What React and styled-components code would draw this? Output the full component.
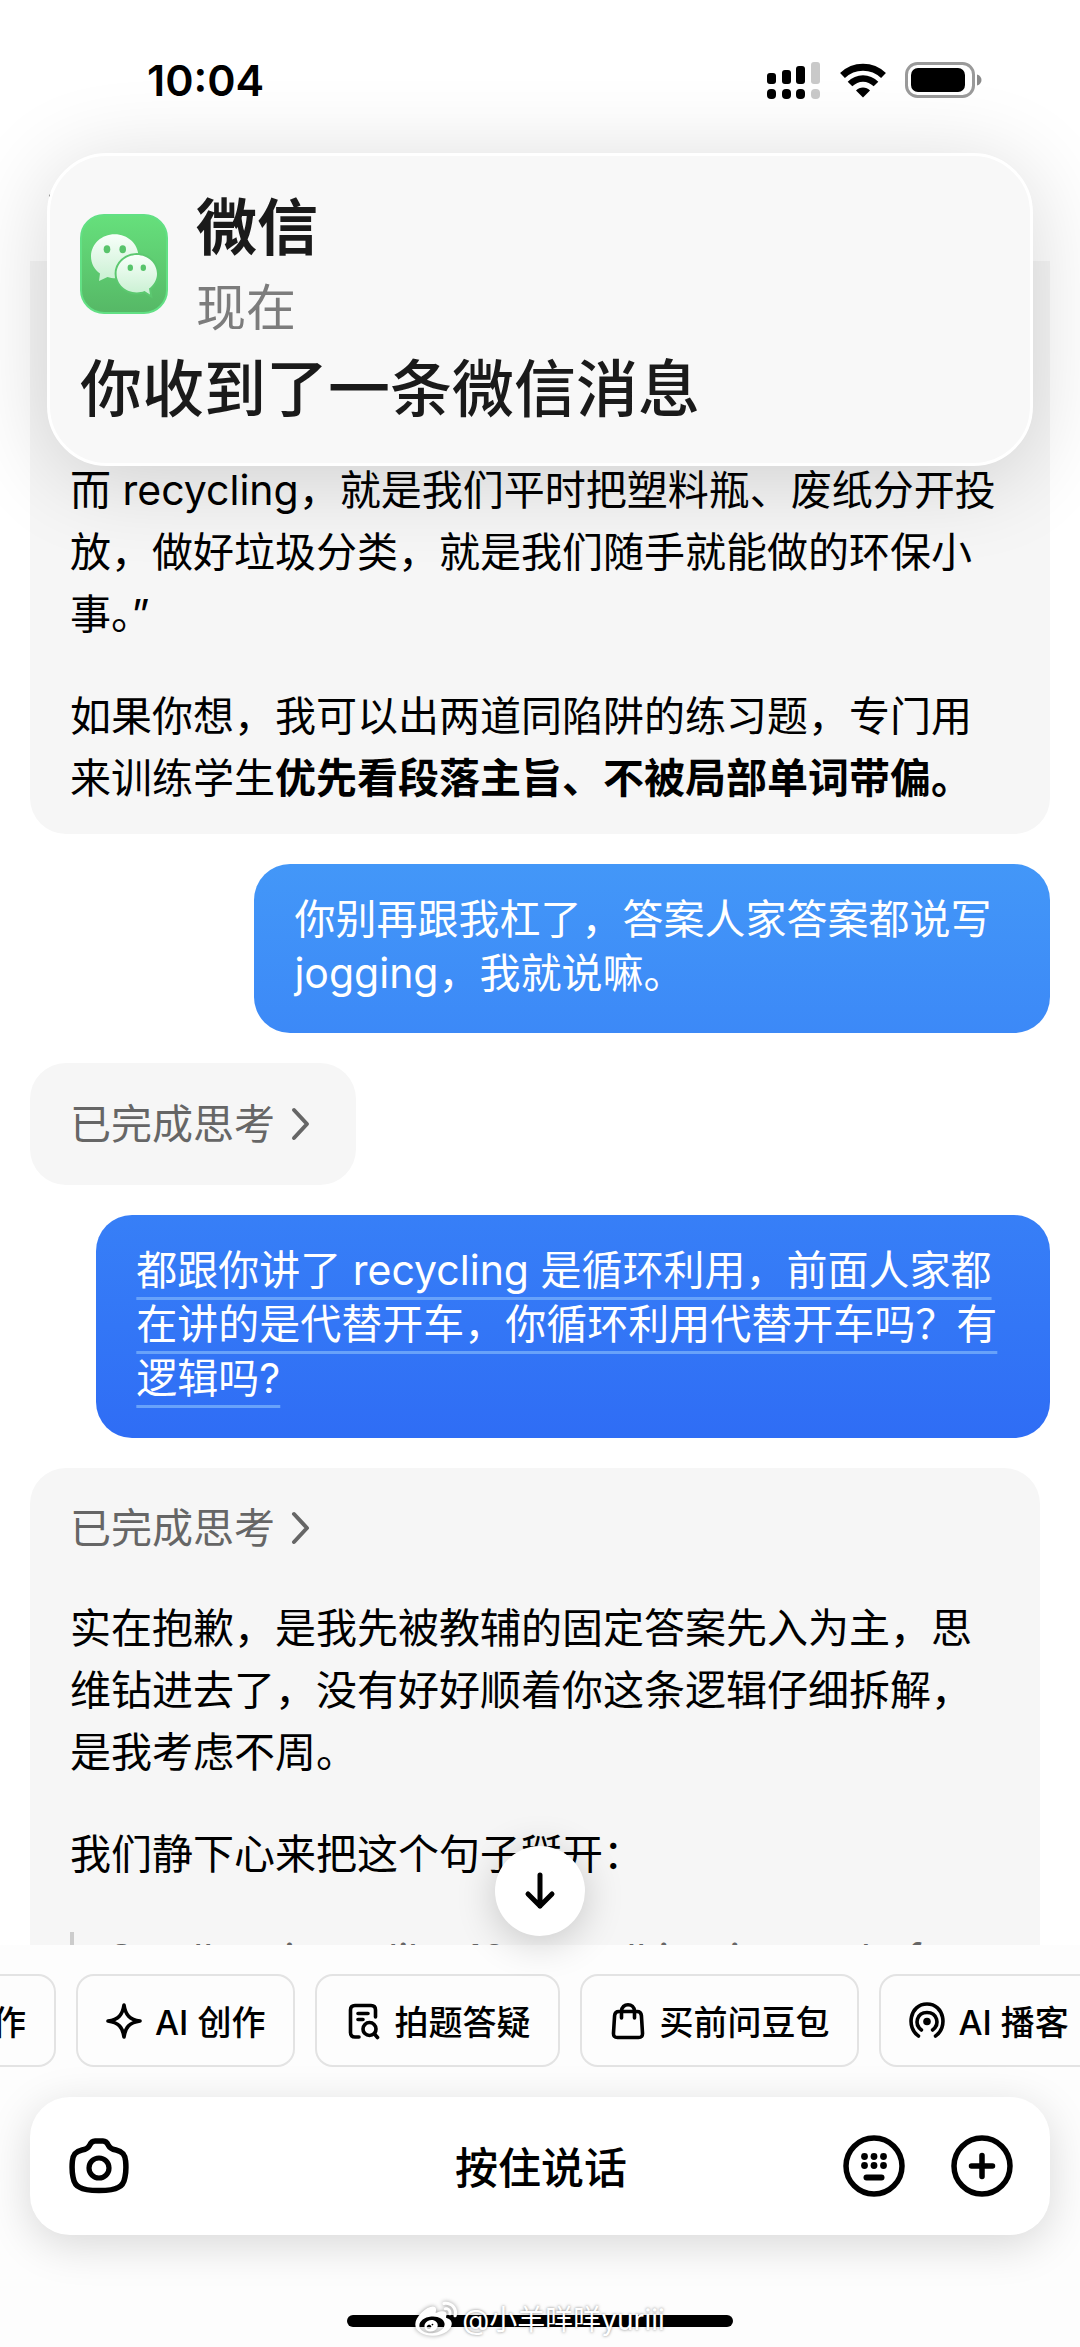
import { useLayoutEffect, useRef } from "react";
import styled, { createGlobalStyle } from "styled-components";
import { FaWeibo } from "react-icons/fa";

const CHIPS = [
	{ id: 1, label: "帮我写作", icon: "pen" },
	{ id: 2, label: "AI 创作", icon: "spark" },
	{ id: 3, label: "拍题答疑", icon: "doc" },
	{ id: 4, label: "买前问豆包", icon: "bag" },
	{ id: 5, label: "AI 播客", icon: "podcast" },
];

//! Icons

const SignalIcon = () => (
	<svg width="54" height="37" viewBox="0 0 54 37" aria-hidden="true">
		<g fill="#000">
			<rect x="0" y="11" width="9" height="11" rx="3" />
			<rect x="15" y="8" width="9" height="14" rx="3" />
			<rect x="29" y="4" width="9" height="18" rx="3" />
			<rect x="0" y="27" width="9" height="10" rx="4" />
			<rect x="15" y="27" width="9" height="10" rx="4" />
			<rect x="29" y="27" width="9" height="10" rx="4" />
		</g>
		<g fill="#c9c9c9">
			<rect x="44" y="0" width="9" height="22" rx="3" />
			<rect x="44" y="27" width="9" height="10" rx="4" />
		</g>
	</svg>
);

const WifiIcon = () => (
	<svg width="48" height="35" viewBox="0 0 48 35" fill="none" aria-hidden="true">
		<path d="M3.5 12.5C15 1.5 33 1.5 44.5 12.5" stroke="#000" strokeWidth="7" />
		<path d="M11 21C18.5 13.5 29.5 13.5 37 21" stroke="#000" strokeWidth="6.5" />
		<path d="M17 27.5C20.5 23.5 27.5 23.5 31 27.5L24 34.5Z" fill="#000" />
	</svg>
);

const BatteryIcon = () => (
	<svg width="77" height="36" viewBox="0 0 77 36" aria-hidden="true">
		<rect x="1.5" y="1.5" width="67" height="33" rx="11" fill="#fff" stroke="#9a9a9a" strokeWidth="3" />
		<rect x="6" y="6" width="54" height="24" rx="7" fill="#000" />
		<path d="M72 12.5C78 14 78 22 72 23.5Z" fill="#8a8a8a" />
	</svg>
);

const WechatIcon = () => (
	<svg width="88" height="100" viewBox="0 0 88 100" aria-hidden="true">
		<defs>
			<linearGradient id="wxBg" x1="0" y1="0" x2="0" y2="1">
				<stop offset="0" stopColor="#66e07c" />
				<stop offset="1" stopColor="#56b866" />
			</linearGradient>
			<linearGradient id="wxBubble" x1="0" y1="0" x2="0" y2="1">
				<stop offset="0" stopColor="#f8fffa" />
				<stop offset="1" stopColor="#c9f0d2" />
			</linearGradient>
		</defs>
		<rect x="1" y="1" width="86" height="98" rx="23" fill="url(#wxBg)" stroke="#62e084" strokeWidth="2" />
		<path
			d="M34.7 20.3C21.6 20.3 11 30 11 42.5C11 49.5 14.5 55.5 20 59.5L19 67L27.5 63C30 64 32.5 64.3 36 64.3C49 64.3 58.4 54.5 58.4 42.3C58.4 30 47.8 20.3 34.7 20.3Z"
			fill="url(#wxBubble)"
		/>
		<path
			d="M56.8 41C45.6 41 36.6 49.4 36.6 59.7C36.6 70 45.6 78.4 56.8 78.4C59.5 78.4 62 78 64.5 77L70 80.5L69 74.5C74 71 77 65.5 77 59.7C77 49.4 68 41 56.8 41Z"
			fill="url(#wxBubble)"
			stroke="#5cc870"
			strokeWidth="4"
			paintOrder="stroke"
		/>
		<g fill="#58c46b">
			<ellipse cx="27" cy="35.3" rx="3.3" ry="4" />
			<ellipse cx="42.7" cy="35.3" rx="3.3" ry="4" />
			<ellipse cx="50.3" cy="53.7" rx="2.7" ry="3.2" />
			<ellipse cx="63.3" cy="53.7" rx="2.7" ry="3.2" />
		</g>
	</svg>
);

const ChevronIcon = () => (
	<svg width="20" height="34" viewBox="0 0 20 34" fill="none" aria-hidden="true">
		<path d="M3 3L16 17L3 31" stroke="#666" strokeWidth="4" strokeLinecap="round" strokeLinejoin="round" />
	</svg>
);

const BackIcon = () => (
	<svg width="20" height="36" viewBox="0 0 20 36" fill="none" aria-hidden="true">
		<path d="M17 3L3 18L17 33" stroke="#000" strokeWidth="4" strokeLinecap="round" strokeLinejoin="round" />
	</svg>
);

const ArrowDownIcon = () => (
	<svg width="32" height="38" viewBox="0 0 32 38" fill="none" aria-hidden="true">
		<path d="M16 3V34M4 22L16 34L28 22" stroke="#000" strokeWidth="5" strokeLinecap="round" strokeLinejoin="round" />
	</svg>
);

const CameraIcon = () => (
	<svg width="60" height="56" viewBox="0 0 60 56" fill="none" stroke="#000" aria-hidden="true">
		<path
			d="M20.5 7.5C22 4 23.5 2.9 26 2.9H34C36.5 2.9 38 4 39.5 7.5C41 10.5 43 11.3 47 12C54 13.5 56 17 56.6 23C57.2 29 57 34 56 39C55 45 53 48 49 49.5C43 53.5 17 53.5 11 49.5C7 48 5 45 4 39C3 34 2.8 29 3.4 23C4 17 6 13.5 13 12C17 11.3 19 10.5 20.5 7.5Z"
			strokeWidth="5.5"
			strokeLinejoin="round"
		/>
		<circle cx="30" cy="30" r="10" strokeWidth="5.2" />
	</svg>
);

const KeyboardIcon = () => (
	<svg width="62" height="62" viewBox="0 0 62 62" fill="none" aria-hidden="true">
		<circle cx="31" cy="31" r="28" stroke="#000" strokeWidth="5.5" />
		<g fill="#000">
			<circle cx="21.5" cy="21.5" r="3.4" />
			<circle cx="31" cy="21.5" r="3.4" />
			<circle cx="40.5" cy="21.5" r="3.4" />
			<circle cx="21.5" cy="30.5" r="3.4" />
			<circle cx="31" cy="30.5" r="3.4" />
			<circle cx="40.5" cy="30.5" r="3.4" />
			<rect x="20.5" y="39.5" width="21" height="6" rx="3" />
		</g>
	</svg>
);

const PlusIcon = () => (
	<svg width="62" height="62" viewBox="0 0 62 62" fill="none" stroke="#000" strokeWidth="5.5" aria-hidden="true">
		<circle cx="31" cy="31" r="28" />
		<path d="M31 20.5V41.5M20.5 31H41.5" strokeLinecap="round" />
	</svg>
);

const ChipIcon = ({ name }) => (
	<svg
		width="36"
		height="38"
		viewBox="0 0 36 38"
		fill="none"
		stroke="#000"
		strokeWidth="3.6"
		strokeLinecap="round"
		strokeLinejoin="round"
		aria-hidden="true">
		{name === "pen" && <path d="M5 33L8 23L26 5L33 12L15 30Z" />}
		{name === "spark" && (
			<path d="M18 3C19.5 13 23.5 17.5 34 19C23.5 20.5 19.5 25 18 35C16.5 25 12.5 20.5 2 19C12.5 17.5 16.5 13 18 3Z" />
		)}
		{name === "doc" && (
			<>
				<path d="M14 35H10C7 35 5.5 33.5 5.5 30.5V8C5.5 5 7 3.5 10 3.5H26C29 3.5 30.5 5 30.5 8V15" />
				<path d="M13 11.5H23M13 17.5H18" />
				<circle cx="24.5" cy="27" r="6.5" />
				<path d="M29.5 32L32.5 35.5" />
			</>
		)}
		{name === "bag" && (
			<>
				<path d="M9 9.5H27C30 9.5 31.2 11 31.4 13.5L32.5 31C32.7 34 31.5 35.5 28.5 35.5H7.5C4.5 35.5 3.3 34 3.5 31L4.6 13.5C4.8 11 6 9.5 9 9.5Z" />
				<path d="M11.5 16V9.5C11.5 0.5 24.5 0.5 24.5 9.5V16" />
			</>
		)}
		{name === "podcast" && (
			<>
				<path d="M9.5 34C-3 26 0.5 2 18 2C35.5 2 39 26 26.5 34" />
				<path d="M12.5 28C4.5 22 8 10.5 18 10.5C28 10.5 31.5 22 23.5 28" />
				<circle cx="18" cy="19.5" r="3.8" fill="#000" stroke="none" />
			</>
		)}
	</svg>
);

const ThinkingLink = () => (
	<ThinkingButton type="button">
		已完成思考
		<ChevronIcon />
	</ThinkingButton>
);

const App = () => {
	const chipsRef = useRef(null);

	// the row rests with only the end of its first chip in view
	useLayoutEffect(() => {
		const row = chipsRef.current;
		row.scrollLeft = row.firstElementChild.offsetWidth - 56;
	}, []);

	return (
		<Screen>
			<GlobalStyle />
			<StatusBar>
				<Clock>10:04</Clock>
				<StatusIcons>
					<SignalIcon />
					<WifiIcon />
					<BatteryIcon />
				</StatusIcons>
			</StatusBar>

			<Header>
				<BackButton type="button" aria-label="返回">
					<BackIcon />
				</BackButton>
			</Header>

			<Notification role="alert">
				<NotificationTop>
					<WechatIcon />
					<div>
						<AppName>微信</AppName>
						<When>现在</When>
					</div>
				</NotificationTop>
				<Message>你收到了一条微信消息</Message>
			</Notification>

			<Chat>
				<Reply $continued>
					<p>
						而 recycling，就是我们平时把塑料瓶、废纸分开投
						<br />
						放，做好垃圾分类，就是我们随手就能做的环保小
						<br />
						事。”
					</p>
					<p>
						如果你想，我可以出两道同陷阱的练习题，专门用
						<br />
						来训练学生<strong>优先看段落主旨、不被局部单词带偏。</strong>
					</p>
				</Reply>

				<Question $width="78%" $from="#4397f8" $to="#3c89f7">
					你别再跟我杠了，答案人家答案都说写
					<br />
					jogging，我就说嘛。
				</Question>

				<ThinkingCard>
					<ThinkingLink />
				</ThinkingCard>

				<Question $width="93.5%" $from="#377ff7" $to="#2f6df5">
					<Underlined>
						都跟你讲了 recycling 是循环利用，前面人家都
						<br />
						在讲的是代替开车，你循环利用代替开车吗？有
						<br />
						逻辑吗?
					</Underlined>
				</Question>

				<Reply $inset>
					<ThinkingLink />
					<p>
						实在抱歉，是我先被教辅的固定答案先入为主，思
						<br />
						维钻进去了，没有好好顺着你这条逻辑仔细拆解，
						<br />
						是我考虑不周。
					</p>
					<p>我们静下心来把这个句子掰开：</p>
					<Quote>Small actions, like 12 or walking instead of</Quote>
				</Reply>
			</Chat>

			<Footer>
				<ScrollButton type="button" aria-label="回到底部">
					<ArrowDownIcon />
				</ScrollButton>
				<Chips ref={chipsRef}>
					{CHIPS.map((item) => (
						<Chip key={item.id} type="button">
							<ChipIcon name={item.icon} />
							{item.label}
						</Chip>
					))}
				</Chips>
				<InputBar>
					<IconButton type="button" aria-label="拍照">
						<CameraIcon />
					</IconButton>
					<TalkButton type="button">按住说话</TalkButton>
					<IconGroup>
						<IconButton type="button" aria-label="键盘">
							<KeyboardIcon />
						</IconButton>
						<IconButton type="button" aria-label="更多">
							<PlusIcon />
						</IconButton>
					</IconGroup>
				</InputBar>
				<HomeIndicator />
				<Watermark>
					<FaWeibo size={42} />
					@小羊咩咩yuriii
				</Watermark>
			</Footer>
		</Screen>
	);
};
export default App;

const GlobalStyle = createGlobalStyle`
	* {
		box-sizing: border-box;
	}
	body {
		margin: 0;
		background-color: #fff;
		color: #000;
		font-family: Inter, "Noto Sans CJK SC", sans-serif;
	}
	button {
		padding: 0;
		border: none;
		background: none;
		color: inherit;
		font-family: inherit;
		cursor: pointer;
	}
	p {
		margin: 0;
	}
	svg {
		display: block;
		flex-shrink: 0;
	}
`;

const Screen = styled.div`
	position: relative;
	display: flex;
	flex-direction: column;
	height: 100vh;
	overflow: hidden;
`;

const StatusBar = styled.div`
	display: flex;
	align-items: center;
	justify-content: space-between;
	height: 160px;
	padding: 0 98px 0 147px;
	flex-shrink: 0;
`;
const Clock = styled.time`
	font-size: 43px;
	font-weight: 600;
`;
const StatusIcons = styled.div`
	display: flex;
	align-items: center;
	gap: 18px;
`;

const Header = styled.header`
	display: flex;
	align-items: flex-start;
	height: 101px;
	padding: 18px 48px;
	flex-shrink: 0;
`;
const BackButton = styled.button`
	display: flex;
`;

const Notification = styled.section`
	position: absolute;
	z-index: 2;
	top: 153px;
	left: 47px;
	right: 47px;
	padding: 28px 30px 27px;
	border: 3px solid #fff;
	border-radius: 60px;
	background-color: #f8f8f8;
	box-shadow: 0 12px 90px rgba(0, 0, 0, 0.16);
	color: #1a1a1a;
`;
const NotificationTop = styled.div`
	display: flex;
	align-items: center;
	gap: 28px;
`;
const AppName = styled.h1`
	margin: 0;
	font-size: 61px;
	line-height: 88px;
	font-weight: 700;
`;
const When = styled.p`
	color: #7c7c7c;
	font-size: 50px;
	line-height: 72px;
`;
const Message = styled.p`
	font-size: 62px;
	line-height: 92px;
	font-weight: 500;
`;

const Chat = styled.main`
	display: flex;
	flex: 1;
	flex-direction: column;
	align-items: flex-start;
	gap: 30px;
	min-height: 0;
	padding: 0 30px;
	overflow: hidden;
`;

const Reply = styled.article`
	display: flex;
	flex-direction: column;
	align-items: flex-start;
	gap: 40px;
	align-self: stretch;
	flex-shrink: 0;
	margin-right: ${(props) => (props.$inset ? "10px" : "0")};
	padding: ${(props) => (props.$continued ? "198px 40px 25px" : "31px 40px")};
	border-radius: ${(props) => (props.$continued ? "0 0 36px 36px" : "36px")};
	background-color: #f6f6f6;
	font-size: 41px;
	line-height: 62px;
	white-space: nowrap;
	strong {
		font-weight: 600;
	}
`;
const Question = styled.article`
	align-self: flex-end;
	flex-shrink: 0;
	width: ${(props) => props.$width};
	padding: 28px 40px 33px;
	border-radius: 36px;
	background: linear-gradient(${(props) => props.$from}, ${(props) => props.$to});
	color: #fff;
	font-size: 41px;
	line-height: 54px;
	white-space: nowrap;
`;
const Underlined = styled.span`
	text-decoration: underline 3px #68a2fa;
	text-decoration-skip-ink: none;
	text-underline-offset: 12px;
`;
const ThinkingCard = styled.div`
	flex-shrink: 0;
	padding: 32px 45px 32px 40px;
	border-radius: 36px;
	background-color: #f6f6f6;
`;
const ThinkingButton = styled.button`
	display: flex;
	align-items: center;
	gap: 16px;
	color: #666;
	font-size: 41px;
	line-height: 58px;
`;
const Quote = styled.blockquote`
	margin: 7px 0 0;
	padding-left: 34px;
	border-left: 4px solid #ccc;
	color: #666;
	line-height: 54px;
`;

const Footer = styled.footer`
	position: relative;
	flex-shrink: 0;
	padding-bottom: 20px;
	background-color: #fdfdfd;
`;
const ScrollButton = styled.button`
	position: absolute;
	bottom: 100%;
	left: 50%;
	display: flex;
	align-items: center;
	justify-content: center;
	width: 90px;
	height: 90px;
	margin: 0 0 9px -45px;
	border-radius: 50%;
	background-color: #fff;
	box-shadow: 0 6px 40px rgba(0, 0, 0, 0.2);
`;
const Chips = styled.nav`
	display: flex;
	gap: 20px;
	padding: 29px 0 30px;
	overflow-x: auto;
	scrollbar-width: none;
`;
const Chip = styled.button`
	display: flex;
	align-items: center;
	flex-shrink: 0;
	gap: 13px;
	height: 93px;
	padding: 0 28px;
	border: 2px solid #e3e3e3;
	border-radius: 18px;
	font-size: 34px;
	font-weight: 500;
	white-space: nowrap;
`;
const InputBar = styled.div`
	position: relative;
	display: grid;
	grid-template-columns: 1fr auto 1fr;
	align-items: center;
	height: 138px;
	margin: 0 30px 80px;
	padding: 0 37px 0 39px;
	border-radius: 40px;
	background-color: #fff;
	box-shadow: 0 10px 44px rgba(0, 0, 0, 0.15);
`;
const IconButton = styled.button`
	display: flex;
`;
const IconGroup = styled.div`
	display: flex;
	justify-content: flex-end;
	gap: 46px;
`;
const TalkButton = styled.button`
	padding-bottom: 3px;
	font-size: 43px;
	font-weight: 500;
`;
const HomeIndicator = styled.div`
	width: 386px;
	height: 12px;
	margin: 0 auto;
	border-radius: 6px;
	background-color: #000;
`;
const Watermark = styled.div`
	position: absolute;
	bottom: 6px;
	left: 50%;
	display: flex;
	align-items: center;
	gap: 5px;
	color: #fff;
	font-size: 28px;
	line-height: 42px;
	white-space: nowrap;
	transform: translateX(-50%);
	text-shadow: 0 0 3px rgba(0, 0, 0, 0.5);
	svg {
		filter: drop-shadow(0 0 2px rgba(0, 0, 0, 0.4));
	}
`;
